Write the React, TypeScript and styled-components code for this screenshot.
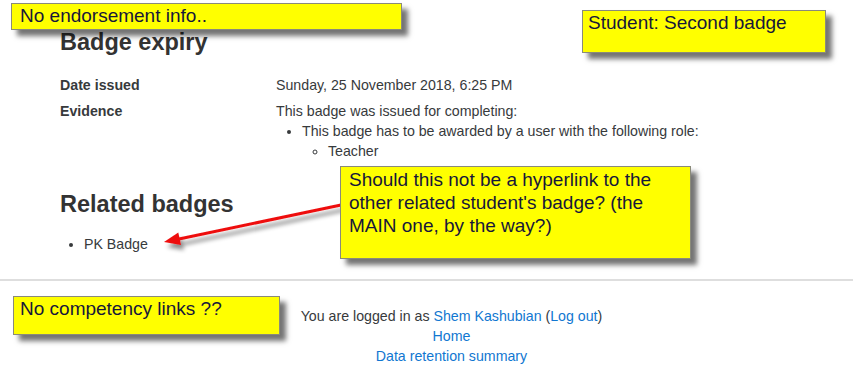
import React from 'react'
import styled, { createGlobalStyle } from 'styled-components'

const GlobalStyle = createGlobalStyle`
  html, body {
    margin: 0;
    padding: 0;
    background: #fff;
  }
  body {
    font-family: "Liberation Sans", Arial, sans-serif;
    font-size: 14.2px;
    line-height: 20px;
    color: #373a3c;
  }
`

type NoteBox = { $x: number; $y: number; $w: number; $h: number; $pad: string }

const notes: Array<NoteBox & { text: string }> = [
  { $x: 11, $y: 3, $w: 391, $h: 27, $pad: '0 8px', text: 'No endorsement info..' },
  { $x: 582, $y: 10, $w: 244, $h: 43, $pad: '0 5px', text: 'Student: Second badge' },
  {
    $x: 340,
    $y: 166,
    $w: 351,
    $h: 93,
    $pad: '1px 8px',
    text: "Should this not be a hyperlink to the other related student's badge? (the MAIN one, by the way?)",
  },
  { $x: 13, $y: 296, $w: 267, $h: 39, $pad: '0 6px', text: 'No competency links ??' },
]

export default function App(): JSX.Element {
  return (
    <>
      <GlobalStyle />
      <Page>
        <Main>
          <SectionTitle>Badge expiry</SectionTitle>
          <Details>
            <Term>Date issued</Term>
            <Desc>Sunday, 25 November 2018, 6:25 PM</Desc>
            <Term>Evidence</Term>
            <Desc>
              This badge was issued for completing:
              <BulletList>
                <li>
                  This badge has to be awarded by a user with the following role:
                  <BulletList $circle>
                    <li>Teacher</li>
                  </BulletList>
                </li>
              </BulletList>
            </Desc>
          </Details>
          <SectionTitle $gap={29}>Related badges</SectionTitle>
          <RelatedList>
            <li>PK Badge</li>
          </RelatedList>
        </Main>
        <Footer>
          <div>
            You are logged in as <Link href="#">Shem Kashubian</Link> (<Link href="#">Log out</Link>)
          </div>
          <div>
            <Link href="#">Home</Link>
          </div>
          <div>
            <Link href="#">Data retention summary</Link>
          </div>
        </Footer>

        <ArrowLayer width="853" height="367" viewBox="0 0 853 367">
          <defs>
            <filter id="arrowShadow" x="-20%" y="-50%" width="140%" height="200%">
              <feDropShadow dx="3" dy="5" stdDeviation="2" floodColor="#000" floodOpacity="0.45" />
            </filter>
          </defs>
          <g filter="url(#arrowShadow)">
            <line x1="341" y1="205" x2="179" y2="239" stroke="#ee1111" strokeWidth="3" />
            <polygon points="164,242 178.3,232.6 181,245" fill="#ee1111" />
          </g>
        </ArrowLayer>

        {notes.map(({ text, ...box }) => (
          <Note key={text} {...box}>
            {text}
          </Note>
        ))}
      </Page>
    </>
  )
}

const Page = styled.div`
  position: relative;
  width: 853px;
  height: 367px;
  overflow: hidden;
`

const Main = styled.main`
  padding: 28px 0 25px 60px;
`

const SectionTitle = styled.h3<{ $gap?: number }>`
  margin: ${({ $gap }) => $gap ?? 0}px 0 0;
  font-size: 23.5px;
  line-height: 28px;
  font-weight: 700;
  color: #333;
`

const Details = styled.dl`
  display: grid;
  grid-template-columns: 216px 1fr;
  row-gap: 6px;
  margin: 19px 0 0;
`

const Term = styled.dt`
  font-weight: 700;
`

const Desc = styled.dd`
  margin: 0;
`

const BulletList = styled.ul<{ $circle?: boolean }>`
  margin: 0;
  padding-left: 26px;
  list-style-type: ${({ $circle }) => ($circle ? 'circle' : 'disc')};
`

const RelatedList = styled.ul`
  margin: 16px 0 0;
  padding-left: 24px;
`

const Footer = styled.footer`
  border-top: 2px solid #dedede;
  padding: 25px 0 0 50px;
  text-align: center;
`

const Link = styled.a`
  color: #1177d1;
  text-decoration: none;
`

const ArrowLayer = styled.svg`
  position: absolute;
  left: 0;
  top: 0;
  pointer-events: none;
`

const Note = styled.div<NoteBox>`
  position: absolute;
  left: ${({ $x }) => $x}px;
  top: ${({ $y }) => $y}px;
  width: ${({ $w }) => $w}px;
  height: ${({ $h }) => $h}px;
  box-sizing: border-box;
  padding: ${({ $pad }) => $pad};
  background: #ffff00;
  border: 1px solid #8a8a7a;
  box-shadow: 6px 6px 5px rgba(0, 0, 0, 0.55);
  font-family: Arial, "Liberation Sans", sans-serif;
  font-size: 19px;
  line-height: 23px;
  color: #17173a;
`
